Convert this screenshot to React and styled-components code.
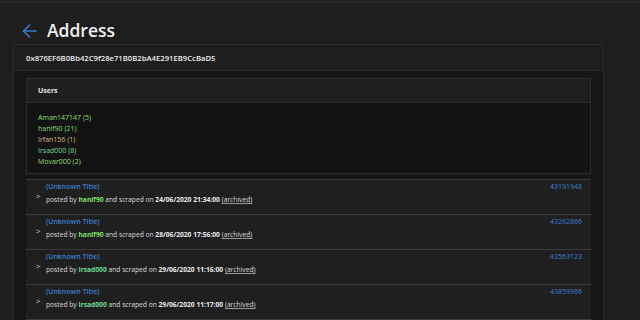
import React from "react";
import styled, { createGlobalStyle } from "styled-components";

const GlobalStyle = createGlobalStyle`
    body {
        margin: 0;
        background: #1e1e1e;
        font-family: "Open Sans", "Noto Sans", sans-serif;
        color: #d8d8d8;
    }
`;

const Page = styled.div`
    border-top: 2px solid #272727;
    margin-top: 1px;
    padding: 0 36px 0 13px;
`;

const Title = styled.header`
    display: flex;
    align-items: center;
    height: 27px;
    padding: 14px 0 0 9px;
    gap: 10px;
`;

const Heading = styled.h1`
    margin: 0;
    font-size: 17.5px;
    font-weight: 600;
    color: #f0f0f0;
    line-height: 1;
`;

const Card = styled.section`
    border: 1px solid #2b2b2b;
    border-bottom: 0;
`;

const CardHeader = styled.div`
    height: 25px;
    display: flex;
    align-items: center;
    padding: 0 12px;
    font-size: 7.7px;
    font-weight: 600;
    color: #ececec;
    background: #1e1e1e;
    border-bottom: 1px solid #262626;
`;

const CardBody = styled.div`
    background: #161616;
    padding: 7px 12px 20px;
`;

const UsersBox = styled.div`
    border: 1px solid #2c2c2c;
    margin-bottom: 5px;
`;

const UsersHeader = styled.div`
    height: 23px;
    display: flex;
    align-items: center;
    padding: 0 11px;
    font-size: 7px;
    font-weight: 700;
    color: #e4e4e4;
    background: #1f1f1f;
    border-bottom: 1px solid #2a2a2a;
`;

const UsersList = styled.ul`
    list-style: none;
    margin: 0;
    padding: 9px 11px 6px;
    background: #131313;
`;

const UserItem = styled.li`
    font-size: 7px;
    line-height: 11px;
    color: ${props => props.color};
`;

const Rows = styled.div`
    border-top: 1px solid #3a3a3a;
`;

const Row = styled.div`
    display: flex;
    align-items: flex-start;
    background: #1f1f1f;
    border-bottom: 1px solid #3a3a3a;
    height: 34px;
    padding: 0 9px 0 10px;
`;

const Chevron = styled.span`
    width: 10px;
    margin-top: 10px;
    font-size: 8px;
    color: #cfcfcf;
`;

const RowMain = styled.div`
    flex: 1;
`;

const PostTitle = styled.div`
    font-size: 7px;
    line-height: 13px;
    font-weight: 600;
    color: #3c7fd2;
`;

const PostMeta = styled.div`
    font-size: 6.7px;
    line-height: 14px;
    color: #dadada;
`;

const Poster = styled.b`
    font-weight: 700;
    color: ${props => props.color};
`;

const DateText = styled.b`
    font-weight: 700;
    color: #ececec;
`;

const Archived = styled.span`
    text-decoration: underline;
    text-underline-offset: 1px;
    text-decoration-color: #9a9a9a;
`;

const PostId = styled.span`
    font-size: 7px;
    line-height: 13px;
    color: #3c7fd2;
`;

const BackArrow = () => (
    <svg width="15" height="14" viewBox="0 0 15 14" fill="none" stroke="#3a7ccc" strokeWidth="1.6" strokeLinecap="round" strokeLinejoin="round">
        <path d="M14 7H1.5" />
        <path d="M7.5 1L1.5 7l6 6" />
    </svg>
);

const users = [
    { name: "Aman147147", count: 5, color: "#8bdc6c" },
    { name: "hanif90", count: 21, color: "#82da70" },
    { name: "Irfan156", count: 1, color: "#dcb47e" },
    { name: "Irsad000", count: 8, color: "#70da94" },
    { name: "Movar000", count: 2, color: "#9adc6c" }
];

const posts = [
    { user: "hanif90", color: "#7ee06e", date: "24/06/2020 21:34:00", id: "43191948" },
    { user: "hanif90", color: "#7ee06e", date: "28/06/2020 17:56:00", id: "43262866" },
    { user: "Irsad000", color: "#6fdc93", date: "29/06/2020 11:16:00", id: "43563123" },
    { user: "Irsad000", color: "#6fdc93", date: "29/06/2020 11:17:00", id: "43859966" }
];

export default function App() {
    return (
        <>
            <GlobalStyle />
            <Page>
                <Title>
                    <BackArrow />
                    <Heading>Address</Heading>
                </Title>
                <Card>
                    <CardHeader>0x876EF6B0Bb42C9f28e71B0B2bA4E291EB9CcBaD5</CardHeader>
                    <CardBody>
                        <UsersBox>
                            <UsersHeader>Users</UsersHeader>
                            <UsersList>
                                {users.map(u => (
                                    <UserItem key={u.name} color={u.color}>{u.name} ({u.count})</UserItem>
                                ))}
                            </UsersList>
                        </UsersBox>
                        <Rows>
                            {posts.map(p => (
                                <Row key={p.id}>
                                    <Chevron>&gt;</Chevron>
                                    <RowMain>
                                        <PostTitle>(Unknown Title)</PostTitle>
                                        <PostMeta>
                                            posted by <Poster color={p.color}>{p.user}</Poster> and scraped on <DateText>{p.date}</DateText> <Archived>(archived)</Archived>
                                        </PostMeta>
                                    </RowMain>
                                    <PostId>{p.id}</PostId>
                                </Row>
                            ))}
                        </Rows>
                    </CardBody>
                </Card>
            </Page>
        </>
    );
}
